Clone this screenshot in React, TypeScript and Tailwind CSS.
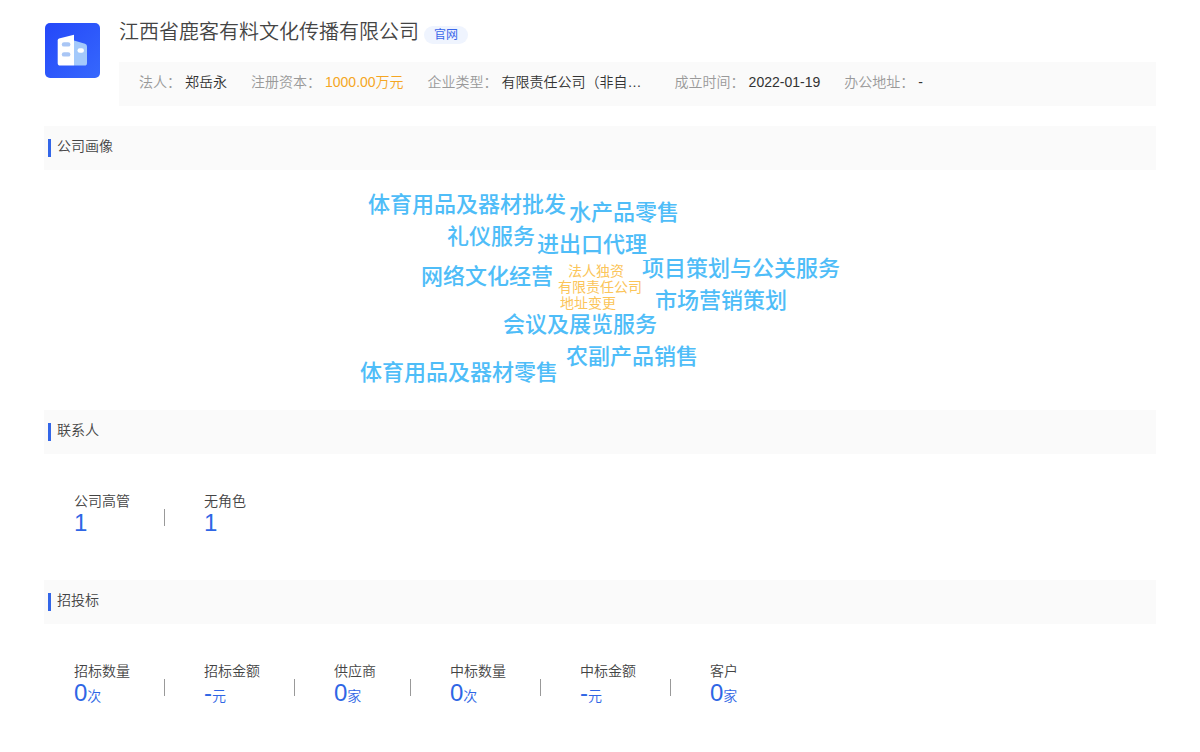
import React from "react";

type Field = { label: string; value: string; style?: string };
type Stat = { label: string; value: string; unit?: string };
type Word = { text: string; place: string; small?: boolean };

const fields: Field[] = [
  { label: "法人：", value: "郑岳永" },
  { label: "注册资本：", value: "1000.00万元", style: "text-[#f5a623]" },
  { label: "企业类型：", value: "有限责任公司（非自…", style: "w-[149px]" },
  { label: "成立时间：", value: "2022-01-19" },
  { label: "办公地址：", value: "-" },
];

const words: Word[] = [
  { text: "体育用品及器材批发", place: "left-[8px] top-[22px]" },
  { text: "水产品零售", place: "left-[209px] top-[30px]" },
  { text: "礼仪服务", place: "left-[87px] top-[54px]" },
  { text: "进出口代理", place: "left-[177px] top-[62px]" },
  { text: "项目策划与公关服务", place: "left-[282px] top-[86px]" },
  { text: "网络文化经营", place: "left-[61px] top-[94px]" },
  { text: "法人独资", place: "left-[208px] top-[93px]", small: true },
  { text: "有限责任公司", place: "left-[198px] top-[109px]", small: true },
  { text: "地址变更", place: "left-[200px] top-[125px]", small: true },
  { text: "市场营销策划", place: "left-[295px] top-[118px]" },
  { text: "会议及展览服务", place: "left-[143px] top-[142px]" },
  { text: "农副产品销售", place: "left-[206px] top-[174px]" },
  { text: "体育用品及器材零售", place: "left-[0px] top-[190px]" },
];

const contacts: Stat[] = [
  { label: "公司高管", value: "1" },
  { label: "无角色", value: "1" },
];

const bids: Stat[] = [
  { label: "招标数量", value: "0", unit: "次" },
  { label: "招标金额", value: "-", unit: "元" },
  { label: "供应商", value: "0", unit: "家" },
  { label: "中标数量", value: "0", unit: "次" },
  { label: "中标金额", value: "-", unit: "元" },
  { label: "客户", value: "0", unit: "家" },
];

function Logo() {
  return (
    <svg viewBox="0 0 56 56" className="size-14 shrink-0" aria-hidden="true">
      <defs>
        <linearGradient id="tile" x1="0" y1="0" x2="1" y2="1">
          <stop offset="0" stopColor="#2447f9" />
          <stop offset="1" stopColor="#3668fd" />
        </linearGradient>
      </defs>
      <rect x="1" y="1" width="55" height="55" rx="5" fill="url(#tile)" />
      <path d="M30 18.5 41 21.8Q43 22.4 43 24.5V41Q43 43.6 40.5 43.6H30Z" fill="#a3c9fb" />
      <path d="M15 16.6 30 12.7V43.6H16.2Q13.7 43.6 13.7 41V18.4Q13.7 17 15 16.6Z" fill="#fff" />
      <rect x="17.8" y="20.2" width="8.6" height="4.4" rx="2.2" fill="#a9c6f5" />
      <rect x="17.8" y="30.2" width="8.6" height="4.4" rx="2.2" fill="#a9c6f5" />
      <rect x="33.5" y="26.3" width="6.5" height="4.5" rx="2.2" fill="#fff" />
    </svg>
  );
}

function Section({ title, children }: { title: string; children: React.ReactNode }) {
  return (
    <section>
      <div className="flex h-11 items-center bg-[#fafafa] pl-1">
        <span className="h-[18px] w-[3px] bg-[#3366e8]" />
        <h2 className="pb-1 pl-1.5 text-sm font-[350] text-[#444]">{title}</h2>
      </div>
      {children}
    </section>
  );
}

function Stats({ items }: { items: Stat[] }) {
  return (
    <dl className="flex h-[126px] items-start pt-9 pl-[30px]">
      {items.map((s, i) => (
        <div key={s.label} className="flex items-end">
          {i > 0 && <span className="mr-[39px] mb-[11px] ml-[34px] h-[17px] w-px bg-[#999]" />}
          <div>
            <dt className="text-sm leading-[22px] font-[350] text-[#444]">{s.label}</dt>
            <dd className="text-sm leading-[22px] font-[350] text-[#2f66e5]">
              <span className="text-2xl leading-[22px]">{s.value}</span>
              {s.unit}
            </dd>
          </div>
        </div>
      ))}
    </dl>
  );
}

export default function App() {
  return (
    <main className="bg-white px-11 pt-[22px] pb-4 font-['Liberation_Sans','Noto_Sans_CJK_SC',sans-serif] text-[#333]">
      <header className="flex gap-[19px] pb-5">
        <Logo />
        <div className="min-w-0 flex-1">
          <div className="flex h-10 items-start">
            <h1 className="text-xl leading-5 font-[350] text-[#444]">江西省鹿客有料文化传播有限公司</h1>
            <a
              href="#site"
              className="mt-1 ml-[5px] rounded-full bg-[#eff4fe] px-2.5 text-xs leading-[18px] text-[#3a66ea]"
            >
              官网
            </a>
          </div>
          <dl className="flex h-11 gap-6 bg-[#fafafa] px-5 pt-2.5 text-sm font-[350]">
            {fields.map((f) => (
              <div key={f.label} className="flex gap-1 whitespace-nowrap">
                <dt className="text-[#999]">{f.label}</dt>
                <dd className={f.style}>{f.value}</dd>
              </div>
            ))}
          </dl>
        </div>
      </header>

      <Section title="公司画像">
        <div className="relative mx-auto h-60 w-[480px]">
          {words.map((w) => (
            <span
              key={w.text}
              className={`absolute whitespace-nowrap ${w.place} ${
                w.small
                  ? "text-sm leading-4 text-[#fbc55a]"
                  : "text-[22px] leading-[26px] font-medium text-[#4fbdf8]"
              }`}
            >
              {w.text}
            </span>
          ))}
        </div>
      </Section>

      <Section title="联系人">
        <Stats items={contacts} />
      </Section>

      <Section title="招投标">
        <Stats items={bids} />
      </Section>
    </main>
  );
}
